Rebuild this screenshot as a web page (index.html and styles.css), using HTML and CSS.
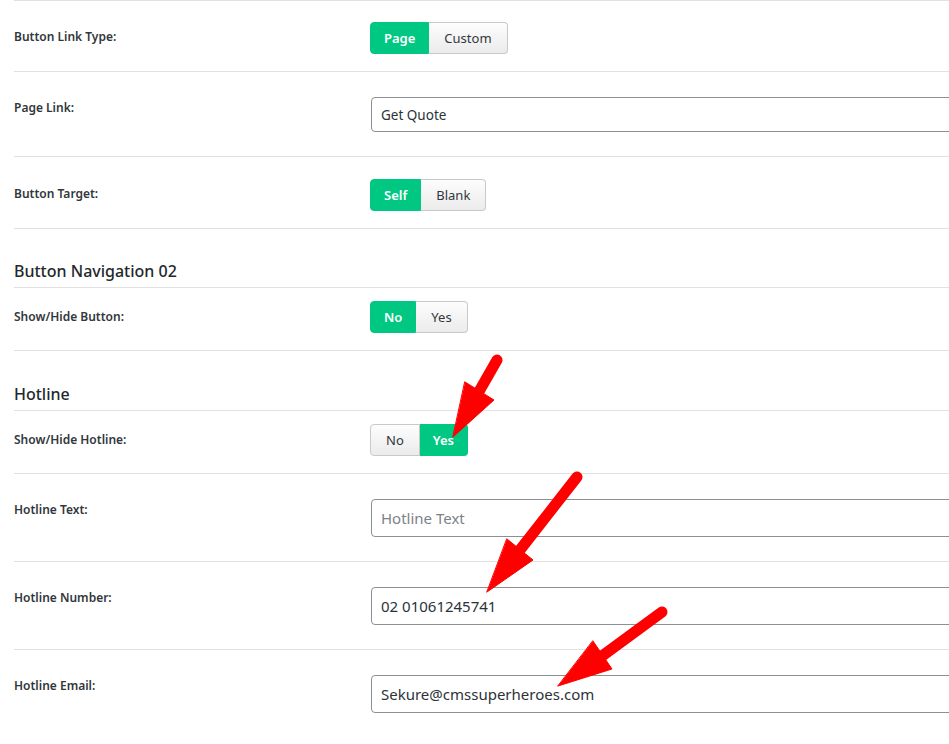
FILE: index.html
```html
<!DOCTYPE html>
<html lang="en">
<head>
  <meta charset="UTF-8" />
  <meta name="viewport" content="width=device-width, initial-scale=1.0" />
  <title>Header Options</title>
  <link rel="stylesheet" href="styles.css">
</head>
<body>
  <div class="settings">
    <!-- Button navigation 01 (continued) -->
    <div class="row row-toggle first">
      <div class="label">Button Link Type:</div>
      <div class="group">
        <span class="opt active">Page</span>
        <span class="opt">Custom</span>
      </div>
    </div>
    <div class="row row-input">
      <div class="label">Page Link:</div>
      <div class="field">
        <select class="select">
          <option>Get Quote</option>
        </select>
      </div>
    </div>
    <div class="row row-toggle">
      <div class="label">Button Target:</div>
      <div class="group">
        <span class="opt active">Self</span>
        <span class="opt">Blank</span>
      </div>
    </div>

    <h3 class="section">Button Navigation 02</h3>
    <div class="row row-toggle after-heading">
      <div class="label">Show/Hide Button:</div>
      <div class="group">
        <span class="opt active">No</span>
        <span class="opt">Yes</span>
      </div>
    </div>

    <h3 class="section second">Hotline</h3>
    <div class="row row-toggle after-heading">
      <div class="label">Show/Hide Hotline:</div>
      <div class="group">
        <span class="opt">No</span>
        <span class="opt active">Yes</span>
      </div>
    </div>
    <div class="row row-input">
      <div class="label">Hotline Text:</div>
      <div class="field">
        <input class="text" type="text" placeholder="Hotline Text" />
      </div>
    </div>
    <div class="row row-input">
      <div class="label">Hotline Number:</div>
      <div class="field">
        <input class="text" type="text" value="02 01061245741" />
      </div>
    </div>
    <div class="row row-input last">
      <div class="label">Hotline Email:</div>
      <div class="field">
        <input class="text" type="text" value="Sekure@cmssuperheroes.com" />
      </div>
    </div>

    <!-- red annotation arrows drawn over the form -->
    <svg class="arrows" width="949" height="744" viewBox="0 0 949 744">
      <g fill="#ff0000" stroke="#ff0000" stroke-linecap="round">
        <line x1="497" y1="361" x2="477" y2="396" stroke-width="11" />
        <polygon points="465,383 494,401 453,438" stroke-width="1" />
        <line x1="577" y1="478" x2="516" y2="556" stroke-width="11" />
        <polygon points="507,540 533,561 487,593" stroke-width="1" />
        <line x1="662" y1="613" x2="598" y2="660" stroke-width="11" />
        <polygon points="593,642 612,670 558,687" stroke-width="1" />
      </g>
    </svg>
  </div>
</body>
</html>
```

FILE: styles.css
```css
/* Page */
html, body {
  margin: 0;
  background: #fff;
  overflow: hidden;
}
body {
  font-family: "Noto Sans", "Open Sans", sans-serif;
  color: #23282d;
}
.settings {
  position: relative;
  padding-left: 14px;
  height: 744px;
}

/* Rows: label column + control */
.row {
  display: flex;
  align-items: flex-start;
  border-bottom: 1px solid #e1e1e1;
}
.row.first {
  border-top: 2px solid #e1e1e1;
  margin-top: -1px;
}
.row.last {
  border-bottom: none;
}
.label {
  width: 356px;
  flex-shrink: 0;
  font-size: 12px;
  font-weight: 600;
  line-height: 16px;
  color: #32373c;
}
.row-toggle {
  padding: 22px 0 17px;
}
.row-toggle.first {
  padding-top: 21px;
}
.row-toggle .label {
  margin-top: 7px;
}
.row-toggle.after-heading {
  padding-top: 13px;
}
.row-toggle.after-heading .label {
  margin-top: 8px;
}
.row-input {
  padding: 25px 0 24px;
}
.row-input .label {
  margin-top: 3px;
}

/* Section headings */
.section {
  margin: 31px 0 0;
  padding-bottom: 5px;
  font-size: 16px;
  font-weight: 500;
  line-height: 22px;
  color: #23282d;
  border-bottom: 1px solid #e1e1e1;
}
.section.second {
  margin-top: 32px;
}

/* Button-set toggles */
.group {
  display: flex;
  height: 32px;
}
.opt {
  display: flex;
  align-items: center;
  padding: 0 15px;
  font-size: 13px;
  color: #32373c;
  background: linear-gradient(#fdfdfd, #ebebeb);
  border: 1px solid #c9c9c9;
}
.opt + .opt {
  border-left: none;
}
.opt:first-child {
  border-radius: 4px 0 0 4px;
}
.opt:last-child {
  border-radius: 0 4px 4px 0;
}
.opt.active {
  padding: 0 13px;
  background: #00c882;
  border-color: #00c882;
  color: #fff;
  font-weight: 600;
}

/* Text fields run off the right edge */
.field {
  flex: 1;
}
.select,
.text {
  display: block;
  box-sizing: border-box;
  width: 640px;
  margin: 0 0 0 1px;
  border: 1px solid #8c8f94;
  border-radius: 4px;
  background: #fff;
  color: #2c3338;
  font-family: "Noto Sans", "Open Sans", sans-serif;
  outline: none;
}
.select {
  height: 35px;
  padding: 0 9px;
  font-size: 13.5px;
  appearance: none;
  -webkit-appearance: none;
}
.text {
  height: 38px;
  padding: 0 9px;
  font-size: 15px;
}
.text::placeholder {
  color: #7c8288;
}

/* Annotation overlay */
.arrows {
  position: absolute;
  left: 0;
  top: 0;
  pointer-events: none;
}
```
